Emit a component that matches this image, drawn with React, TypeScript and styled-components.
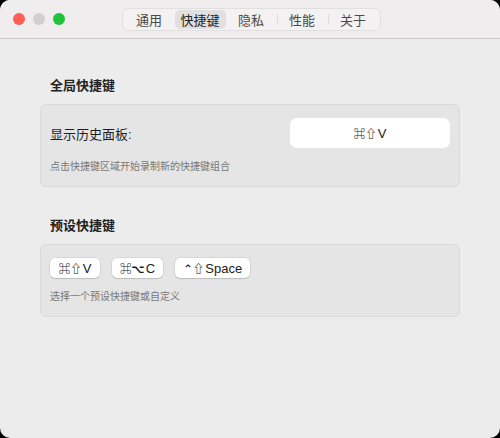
import styled, { createGlobalStyle } from "styled-components";

const GlobalStyle = createGlobalStyle`
  html, body {
    margin: 0;
    padding: 0;
    background: #000;
  }
  body {
    font-family: "Liberation Sans", "Noto Sans CJK SC", "DejaVu Sans", sans-serif;
    -webkit-font-smoothing: antialiased;
  }
`;

const Window = styled.div`
  width: 500px;
  height: 438px;
  border-radius: 10px;
  overflow: hidden;
  background: #ececec;
  display: flex;
  flex-direction: column;
`;

const TitleBar = styled.div`
  position: relative;
  height: 38px;
  flex-shrink: 0;
  background: #efeded;
  border-bottom: 1px solid #c9c8c8;
  display: flex;
  align-items: center;
  justify-content: center;
`;

const Lights = styled.div`
  position: absolute;
  left: 13px;
  top: 13px;
  display: flex;
  gap: 8px;
`;

const Light = styled.span<{ $color: string }>`
  width: 12px;
  height: 12px;
  border-radius: 50%;
  background: ${(p) => p.$color};
`;

const Segmented = styled.div`
  margin-left: 2px;
  width: 255px;
  height: 19px;
  padding: 1px;
  border: 1px solid #e0dfdf;
  border-radius: 6px;
  background: #f3f1f1;
  display: flex;
`;

const Segment = styled.div<{ $active?: boolean; $sep?: boolean }>`
  position: relative;
  flex: 1;
  display: flex;
  align-items: center;
  justify-content: center;
  font-size: 13px;
  color: ${(p) => (p.$active ? "#262626" : "#4a4a4a")};
  background: ${(p) => (p.$active ? "#e1dfdf" : "transparent")};
  border-radius: 5px;

  &::before {
    content: "";
    display: ${(p) => (p.$sep ? "block" : "none")};
    position: absolute;
    left: 0;
    top: 4px;
    bottom: 4px;
    width: 1px;
    background: #dcdada;
  }
`;

const Content = styled.div`
  padding: 39px 40px 0;
  display: flex;
  flex-direction: column;
`;

const Heading = styled.div<{ $top?: number }>`
  margin: ${(p) => p.$top ?? 0}px 0 10px 10px;
  font-size: 13px;
  line-height: 16px;
  font-weight: 700;
  color: #222;
`;

const Panel = styled.div`
  background: #e5e5e5;
  border: 1px solid #dadada;
  border-radius: 6px;
  padding: 13px 9px 13px;
  display: flex;
  flex-direction: column;
`;

const Row = styled.div`
  display: flex;
  align-items: center;
  justify-content: space-between;
`;

const Label = styled.span`
  font-size: 13px;
  color: #1e1e1e;
`;

const Recorder = styled.div`
  width: 160px;
  height: 30px;
  border-radius: 7px;
  background: #fff;
  display: flex;
  align-items: center;
  justify-content: center;
  font-size: 13px;
  color: #222;
`;

const Hint = styled.div<{ $gap: number }>`
  margin-top: ${(p) => p.$gap}px;
  font-size: 10px;
  line-height: 13px;
  color: #777;
`;

const Presets = styled.div`
  display: flex;
  gap: 12px;
`;

const KeyButton = styled.button`
  height: 20px;
  padding: 0 8px;
  min-width: 50px;
  border: none;
  border-radius: 5px;
  background: #fff;
  box-shadow: 0 0 0 0.5px rgba(0, 0, 0, 0.12), 0 1px 1px rgba(0, 0, 0, 0.12);
  font-family: inherit;
  font-size: 13px;
  color: #222;
  display: flex;
  align-items: center;
  justify-content: center;
`;

const Sym = styled.span`
  font-family: "Noto Sans CJK SC", "DejaVu Sans", sans-serif;
  font-size: 11.5px;
  font-weight: 700;
  color: #1a1a1a;
  margin-right: 1px;
`;

const Combo = ({ mods, keyName }: { mods: string; keyName: string }) => (
  <>
    <Sym>{mods}</Sym>
    {keyName}
  </>
);

const tabs = ["通用", "快捷键", "隐私", "性能", "关于"];
const activeTab = 1;

const presets = [
  { mods: "⌘⇧", keyName: "V" },
  { mods: "⌘⌥", keyName: "C" },
  { mods: "⌃⇧", keyName: "Space" },
];

export default function App() {
  return (
    <>
      <GlobalStyle />
      <Window>
        <TitleBar>
          <Lights>
            <Light $color="#fe5f57" />
            <Light $color="#d1d0d0" />
            <Light $color="#1fc23b" />
          </Lights>
          <Segmented>
            {tabs.map((t, i) => (
              <Segment
                key={t}
                $active={i === activeTab}
                $sep={i > 0 && i !== activeTab && i - 1 !== activeTab}
              >
                {t}
              </Segment>
            ))}
          </Segmented>
        </TitleBar>
        <Content>
          <Heading>全局快捷键</Heading>
          <Panel>
            <Row>
              <Label>显示历史面板:</Label>
              <Recorder>
                <Combo mods="⌘⇧" keyName="V" />
              </Recorder>
            </Row>
            <Hint $gap={12}>点击快捷键区域开始录制新的快捷键组合</Hint>
          </Panel>
          <Heading $top={31}>预设快捷键</Heading>
          <Panel>
            <Presets>
              {presets.map((p) => (
                <KeyButton key={p.keyName}>
                  <Combo mods={p.mods} keyName={p.keyName} />
                </KeyButton>
              ))}
            </Presets>
            <Hint $gap={12}>选择一个预设快捷键或自定义</Hint>
          </Panel>
        </Content>
      </Window>
    </>
  );
}
